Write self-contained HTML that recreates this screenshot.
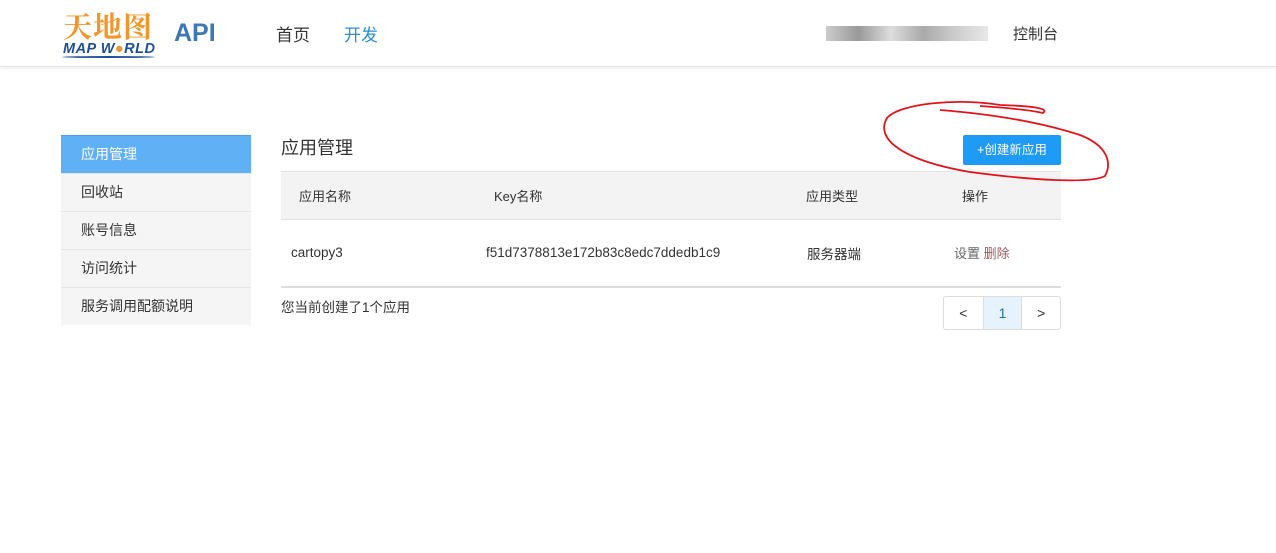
<!DOCTYPE html>
<html><head><meta charset="utf-8"><style>
body{margin:0;width:1276px;height:553px;background:#fff;font-family:"Liberation Sans","Noto Sans CJK SC",sans-serif;position:relative;overflow:hidden;color:#333}
.hdr{position:absolute;left:0;top:0;width:1276px;height:66px;background:#fff;border-bottom:1px solid #e6e6e6;box-shadow:0 2px 3px rgba(0,0,0,.06)}
.a{position:absolute;white-space:nowrap}
.side div{height:37px;line-height:37px;padding-left:20px;font-size:14px;background:#f5f5f5;border-bottom:1px solid #e5e5e5;color:#333}
</style></head><body>
<div class="hdr">
 <div class="a" style="left:63px;top:5px;font-family:'Noto Serif CJK SC',serif;font-size:29px;font-weight:bold;color:#f0962a;letter-spacing:1px">天地图</div>
 <div class="a" style="left:63px;top:41px;font-size:14.5px;font-weight:bold;font-style:italic;color:#1d4f9c;letter-spacing:.5px">MAP W<span style="color:#f0962a">●</span>RLD</div>
 <div class="a" style="left:62px;top:56px;width:93px;height:2px;background:#1d4f9c;border-radius:50%"></div>
 <div class="a" style="left:174px;top:19px;font-size:25px;font-weight:bold;color:#3c79b4">API</div>
 <div class="a" style="left:276px;top:21px;font-size:17px;color:#333">首页</div>
 <div class="a" style="left:344px;top:21px;font-size:17px;color:#2b8ed1">开发</div>
 <div class="a" style="left:826px;top:26px;width:162px;height:15px;background:linear-gradient(90deg,#ccc,#999 20%,#ddd 40%,#aaa 60%,#ccc 80%,#e8e8e8)"></div>
 <div class="a" style="left:1013px;top:23px;font-size:15px;color:#333">控制台</div>
</div>
<div class="a side" style="left:61px;top:135px;width:190px;border-top:1px solid #4a9fe6">
 <div style="background:#5fb0f5;color:#fff">应用管理</div>
 <div>回收站</div><div>账号信息</div><div>访问统计</div><div style="border:none">服务调用配额说明</div>
</div>
<div class="a" style="left:281px;top:134px;font-size:18px;color:#333">应用管理</div>
<div class="a" style="left:963px;top:135px;width:98px;height:30px;background:#1e9bf6;border-radius:2px;color:#fff;font-size:12.5px;line-height:30px;text-align:center">+创建新应用</div>
<div class="a" style="left:281px;top:171px;width:780px;height:47px;background:#f3f3f3;border-top:1px solid #e5e5e5;border-bottom:1px solid #e0e0e0"></div>
<div class="a" style="left:299px;top:186px;font-size:13px">应用名称</div>
<div class="a" style="left:494px;top:186px;font-size:13px">Key名称</div>
<div class="a" style="left:806px;top:186px;font-size:13px">应用类型</div>
<div class="a" style="left:962px;top:186px;font-size:13px">操作</div>
<div class="a" style="left:291px;top:245px;font-size:13.5px">cartopy3</div>
<div class="a" style="left:486px;top:245px;font-size:13.5px">f51d7378813e172b83c8edc7ddedb1c9</div>
<div class="a" style="left:807px;top:243px;font-size:13.5px">服务器端</div>
<div class="a" style="left:954px;top:243px;font-size:13px;color:#666">设置 <span style="color:#a05a5a">删除</span></div>
<div class="a" style="left:281px;top:286px;width:780px;height:2px;background:#ddd"></div>
<div class="a" style="left:281px;top:296px;font-size:13.5px">您当前创建了1个应用</div>
<div class="a" style="left:943px;top:296px;width:116px;height:32px;border:1px solid #ddd;border-radius:3px;display:flex;font-size:14px;line-height:32px;text-align:center">
 <div style="width:39px;border-right:1px solid #ddd">&lt;</div>
 <div style="width:38px;background:#e6f2fc;color:#1e6fb8;border-right:1px solid #ddd">1</div>
 <div style="width:38px">&gt;</div>
</div>
<svg class="a" style="left:880px;top:98px" width="232" height="86"><path d="M120 7 C80 0 20 5 7 20 C-5 40 20 62 90 74 C150 82 210 86 225 78 C232 65 228 48 200 37 C160 24 110 16 60 12 M120 7 C 150 8 170 10 163 15 C150 12 130 10 100 8" fill="none" stroke="#e0141c" stroke-width="1.8"/></svg>
</body></html>
